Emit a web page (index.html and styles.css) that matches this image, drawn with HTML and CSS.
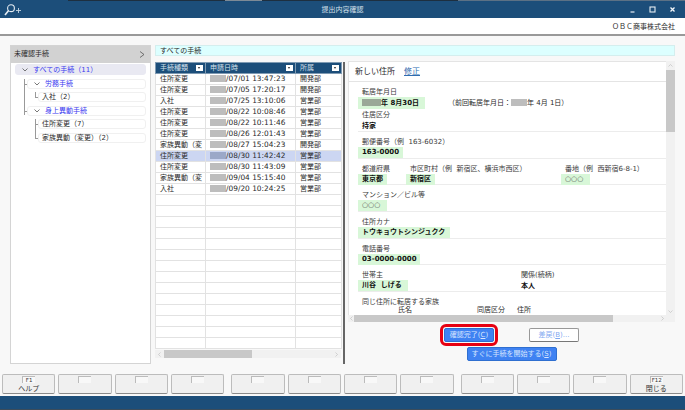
FILE: index.html
```html
<!DOCTYPE html>
<html lang="ja">

<head>
  <meta charset="utf-8">
  <title>提出内容確認</title>
  <link rel="stylesheet" href="styles.css">
</head>

<body>
  <div class="window">
    <div class="topline"></div>
    <div class="titlebar">
      <svg class="zoom-icon" width="17" height="12" viewBox="0 0 17 12">
        <circle cx="7" cy="4.2" r="3.4" fill="none" stroke="#e6edf3" stroke-width="1.1"/>
        <path d="M4.6 6.6 L1 11" stroke="#e6edf3" stroke-width="1.6" fill="none"/>
        <path d="M12 6.5 H17 M14.5 4 V9" stroke="#c8d6e2" stroke-width="0.9" fill="none"/>
      </svg>
      <span class="title">提出内容確認</span>
      <div class="win-buttons">
        <svg width="7" height="7" viewBox="0 0 7 7"><path d="M1.5 6 H5.5" stroke="#e6edf3" stroke-width="1.2"/></svg>
        <svg width="7" height="7" viewBox="0 0 7 7"><rect x="1" y="1" width="5" height="5" fill="none" stroke="#e6edf3" stroke-width="1.1"/></svg>
        <svg width="7" height="7" viewBox="0 0 7 7"><path d="M1.5 1.5 L5.5 5.5 M5.5 1.5 L1.5 5.5" stroke="#f4f7fa" stroke-width="1.3"/></svg>
      </div>
    </div>
    <div class="companybar">ＯＢＣ商事株式会社</div>

    <div class="main">
      <div class="left-panel">
        <div class="left-head">
          <span>未確認手続</span>
          <svg width="6" height="7" viewBox="0 0 6 7"><path d="M1 0.5 L5 3.5 L1 6.5" fill="none" stroke="#555" stroke-width="0.8"/></svg>
        </div>
        <ul class="tree">
          <li>
            <div class="node root">
              <svg class="chev" width="6" height="4" viewBox="0 0 6 4"><path d="M0.5 0.5 L3 3 L5.5 0.5" fill="none" stroke="#555" stroke-width="0.8"/></svg>
              <span class="link">すべての手続（11）</span>
            </div>
            <ul class="level1">
              <li>
                <div class="node">
                  <svg class="chev" width="6" height="4" viewBox="0 0 6 4"><path d="M0.5 0.5 L3 3 L5.5 0.5" fill="none" stroke="#555" stroke-width="0.8"/></svg>
                  <span class="link">労務手続</span>
                </div>
                <ul class="level2">
                  <li><div class="node leaf">入社（2）</div></li>
                </ul>
              </li>
              <li>
                <div class="node">
                  <svg class="chev" width="6" height="4" viewBox="0 0 6 4"><path d="M0.5 0.5 L3 3 L5.5 0.5" fill="none" stroke="#555" stroke-width="0.8"/></svg>
                  <span class="link">身上異動手続</span>
                </div>
                <ul class="level2">
                  <li><div class="node leaf">住所変更（7）</div></li>
                  <li><div class="node leaf">家族異動（変更）（2）</div></li>
                </ul>
              </li>
            </ul>
          </li>
        </ul>
      </div>

      <div class="right-col">
        <div class="banner">すべての手続</div>
        <div class="content">
          <div class="list-col">
            <table class="list">
              <colgroup><col class="c1"><col class="c2"><col class="c3"></colgroup>
              <thead>
                <tr>
                  <th>手続種類<span class="drop"></span></th>
                  <th>申請日時<span class="drop"></span></th>
                  <th>所属<span class="drop"></span></th>
                </tr>
              </thead>
              <tbody>
                <tr><td>住所変更</td><td><span class="mask"></span><span class="num">/07/01 13:47:23</span></td><td>開発部</td></tr>
                <tr><td>住所変更</td><td><span class="mask"></span><span class="num">/07/05 17:20:17</span></td><td>開発部</td></tr>
                <tr><td>入社</td><td><span class="mask"></span><span class="num">/07/25 13:10:06</span></td><td>営業部</td></tr>
                <tr><td>住所変更</td><td><span class="mask"></span><span class="num">/08/22 10:08:46</span></td><td>営業部</td></tr>
                <tr><td>住所変更</td><td><span class="mask"></span><span class="num">/08/22 10:11:46</span></td><td>営業部</td></tr>
                <tr><td>住所変更</td><td><span class="mask"></span><span class="num">/08/26 12:01:43</span></td><td>営業部</td></tr>
                <tr><td>家族異動（変</td><td><span class="mask"></span><span class="num">/08/27 15:04:23</span></td><td>開発部</td></tr>
                <tr class="selected"><td>住所変更</td><td><span class="mask"></span><span class="num">/08/30 11:42:42</span></td><td>営業部</td></tr>
                <tr><td>住所変更</td><td><span class="mask"></span><span class="num">/08/30 11:43:09</span></td><td>営業部</td></tr>
                <tr><td>家族異動（変</td><td><span class="mask"></span><span class="num">/09/04 15:15:40</span></td><td>営業部</td></tr>
                <tr><td>入社</td><td><span class="mask"></span><span class="num">/09/20 10:24:25</span></td><td>営業部</td></tr>
                <tr><td></td><td></td><td></td></tr>
                <tr><td></td><td></td><td></td></tr>
                <tr><td></td><td></td><td></td></tr>
                <tr><td></td><td></td><td></td></tr>
                <tr><td></td><td></td><td></td></tr>
                <tr><td></td><td></td><td></td></tr>
                <tr><td></td><td></td><td></td></tr>
                <tr><td></td><td></td><td></td></tr>
                <tr><td></td><td></td><td></td></tr>
                <tr><td></td><td></td><td></td></tr>
                <tr><td></td><td></td><td></td></tr>
                <tr><td></td><td></td><td></td></tr>
                <tr><td></td><td></td><td></td></tr>
                <tr><td></td><td></td><td></td></tr>
              </tbody>
            </table>
            <div class="hscroll list-scroll">
              <svg width="3" height="5" viewBox="0 0 3 5"><path d="M2.5 0.5 L0.5 2.5 L2.5 4.5" fill="none" stroke="#bbb" stroke-width="0.6"/></svg>
              <div class="thumb"></div>
              <svg width="3" height="5" viewBox="0 0 3 5"><path d="M0.5 0.5 L2.5 2.5 L0.5 4.5" fill="none" stroke="#bbb" stroke-width="0.6"/></svg>
            </div>
          </div>

          <div class="splitter"></div>

          <div class="detail-col">
            <div class="detail-box">
              <div class="detail-view">
                <div class="detail-head">新しい住所<a class="edit">修正</a></div>

                <div class="sec sec-first">
                  <div class="label">転居年月日</div>
                  <div class="value-row">
                    <span class="value date-value"><span class="mask mask-dark"></span>年&nbsp;8月30日</span>
                    <span class="prev">（前回転居年月日：<span class="mask"></span>年 4月 1日）</span>
                  </div>
                  <div class="label">住居区分</div>
                  <div class="value plain">持家</div>
                </div>

                <div class="sec">
                  <div class="label">郵便番号（例&nbsp;&nbsp;163-6032）</div>
                  <span class="value w-zip">163-0000</span>
                </div>

                <div class="sec sec-address">
                  <div>
                    <div class="label">都道府県</div>
                    <span class="value w-short">東京都</span>
                  </div>
                  <div>
                    <div class="label">市区町村（例&nbsp;&nbsp;新宿区、横浜市西区）</div>
                    <span class="value w-short">新宿区</span>
                  </div>
                  <div>
                    <div class="label">番地（例&nbsp;&nbsp;西新宿6-8-1）</div>
                    <span class="value w-short thin">○○○</span>
                  </div>
                </div>

                <div class="sec">
                  <div class="label">マンション／ビル等</div>
                  <span class="value w-short thin">○○○</span>
                </div>

                <div class="sec">
                  <div class="label">住所カナ</div>
                  <span class="value w-kana">トウキョウトシンジュクク</span>
                </div>

                <div class="sec">
                  <div class="label">電話番号</div>
                  <span class="value w-tel">03-0000-0000</span>
                </div>

                <div class="sec sec-head">
                  <div>
                    <div class="label">世帯主</div>
                    <span class="value w-head">川谷&nbsp;&nbsp;しげる</span>
                  </div>
                  <div>
                    <div class="label">関係(続柄)</div>
                    <div class="value plain">本人</div>
                  </div>
                </div>

                <div class="sec sec-last">
                  <div class="label">同じ住所に転居する家族</div>
                  <div class="family-cols">
                    <span>氏名</span><span>同居区分</span><span>住所</span>
                  </div>
                </div>
              </div>

              <div class="vscroll">
                <svg width="5" height="3" viewBox="0 0 5 3"><path d="M0.5 2.5 L2.5 0.5 L4.5 2.5" fill="none" stroke="#bbb" stroke-width="0.6"/></svg>
                <div class="thumb"></div>
                <svg class="arrow-end" width="5" height="3" viewBox="0 0 5 3"><path d="M0.5 0.5 L2.5 2.5 L4.5 0.5" fill="none" stroke="#bbb" stroke-width="0.6"/></svg>
              </div>

              <div class="hscroll detail-scroll">
                <svg width="3" height="5" viewBox="0 0 3 5"><path d="M2.5 0.5 L0.5 2.5 L2.5 4.5" fill="none" stroke="#bbb" stroke-width="0.6"/></svg>
                <div class="thumb"></div>
                <svg width="3" height="5" viewBox="0 0 3 5"><path d="M0.5 0.5 L2.5 2.5 L0.5 4.5" fill="none" stroke="#bbb" stroke-width="0.6"/></svg>
              </div>
              <div class="scroll-corner"></div>
            </div>

            <div class="actions">
              <div class="action-row">
                <button class="btn btn-primary btn-focus">確認完了(<u>C</u>)</button>
                <button class="btn btn-plain">差戻(<u>B</u>)...</button>
              </div>
              <button class="btn btn-primary btn-start">すぐに手続を開始する(<u>S</u>)</button>
            </div>
          </div>
        </div>
      </div>
    </div>

    <div class="fkeys">
      <div class="fgroup">
        <button class="fkey"><span class="fname">F1</span><span class="fcap">ヘルプ</span></button>
        <button class="fkey"><span class="fname"></span></button>
        <button class="fkey"><span class="fname"></span></button>
        <button class="fkey"><span class="fname"></span></button>
      </div>
      <div class="fgroup">
        <button class="fkey"><span class="fname"></span></button>
        <button class="fkey"><span class="fname"></span></button>
        <button class="fkey"><span class="fname"></span></button>
        <button class="fkey"><span class="fname"></span></button>
      </div>
      <div class="fgroup">
        <button class="fkey"><span class="fname"></span></button>
        <button class="fkey"><span class="fname"></span></button>
        <button class="fkey"><span class="fname"></span></button>
        <button class="fkey"><span class="fname">F12</span><span class="fcap">閉じる</span></button>
      </div>
    </div>
    <div class="statusbar"></div>
  </div>
</body>

</html>
```

FILE: styles.css
```css
:root {
  --primary-color: #1c4e7a;
  --background-color: #f8f8f8;
  --text-color: #2a2a2a;
  --link-color: #3a3af0;
  --border-color: #d4d4d4;
  --value-color: #d8f7d8;
  --button-color: #3f82f2;
  --scroll-color: #c8c8c8;
}

* {
  box-sizing: border-box;
}

html,
body {
  margin: 0;
  padding: 0;
}

body {
  font-family: "DejaVu Sans", "Noto Sans CJK JP", sans-serif;
  font-size: 7px;
  line-height: 11px;
  color: var(--text-color);
  background: var(--background-color);
}

ul {
  list-style: none;
  margin: 0;
  padding: 0;
}

.window {
  width: 685px;
  height: 410px;
  display: flex;
  flex-direction: column;
  overflow: hidden;
}

.topline {
  height: 1px;
  flex: none;
  background: linear-gradient(to right,
      var(--primary-color) 68px,
      #1d2f40 68px, #1d2f40 225px,
      #7d8a96 225px, #7d8a96 262px,
      #1d2f40 262px, #1d2f40 458px,
      #5c7185 458px);
}

/* title bar */
.titlebar {
  height: 17px;
  flex: none;
  background: var(--primary-color);
  color: #d5e0ea;
  display: flex;
  align-items: center;
  justify-content: center;
  padding-top: 2px;
  position: relative;
}

.zoom-icon {
  position: absolute;
  left: 4px;
  top: 3px;
}

.win-buttons {
  position: absolute;
  right: 9px;
  top: 5px;
  display: flex;
  gap: 13px;
}

.companybar {
  height: 18px;
  flex: none;
  background: #fff;
  border-bottom: 2px solid #999;
  text-align: right;
  padding: 4px 10px 0 0;
}

/* main area */
.main {
  flex: 1;
  min-height: 0;
  display: flex;
  gap: 4px;
  padding: 9px 10px;
}

.left-panel {
  width: 141px;
  flex: none;
  background: #fff;
  border: 1px solid var(--border-color);
}

.left-head {
  height: 17px;
  background: #d2d2d2;
  display: flex;
  align-items: center;
  justify-content: space-between;
  padding: 0 5px 0 3px;
}

.tree {
  padding: 1px 4px 0 4px;
}

.node {
  height: 10px;
  line-height: 10px;
  margin-top: 3.5px;
  background: #fff;
  border: 1px solid #f0f0f0;
  border-radius: 3px;
  display: flex;
  align-items: center;
  position: relative;
  white-space: nowrap;
}

.node.root {
  height: 11px;
  margin-top: 0;
  background: #e9e9f2;
  border-color: #e9e9f2;
}

.chev {
  margin: 0 5px 0 6px;
  flex: none;
}

.node.root .chev {
  margin-right: 5px;
}

.link {
  color: var(--link-color);
}

.leaf {
  padding-left: 3px;
}

.level1 {
  margin-left: 12px;
}

.level2 {
  margin-left: 11px;
}

/* connector lines of the tree */
.level1 > li > .node::before,
.level2 > li > .node::before {
  content: "";
  position: absolute;
  left: -4px;
  top: 4px;
  width: 3px;
  height: 1px;
  background: #999;
}

.level1,
.level2 {
  position: relative;
}

.level1::before,
.level2::before {
  content: "";
  position: absolute;
  left: -3px;
  top: 0;
  width: 1px;
  background: #999;
}

.level1::before {
  bottom: 28px;
}

.level2::before {
  bottom: 5px;
}

.right-col {
  flex: 1;
  min-width: 0;
  display: flex;
  flex-direction: column;
}

.banner {
  height: 11px;
  flex: none;
  background: #dcffff;
  border: 1px solid #d4eeee;
  line-height: 10px;
  padding-left: 4px;
}

.content {
  flex: 1;
  min-height: 0;
  display: flex;
  margin-top: 5px;
}

/* list */
.list-col {
  width: 186px;
  flex: none;
  padding-top: 1px;
}

.list {
  width: 186px;
  table-layout: fixed;
  border-collapse: collapse;
  background: #fff;
}

.c1 {
  width: 50px;
}

.c2 {
  width: 90px;
}

.c3 {
  width: 46px;
}

.list th,
.list td {
  height: 11px;
  line-height: 10px;
  padding: 0 0 0 4px;
  font-weight: normal;
  text-align: left;
  white-space: nowrap;
  overflow: hidden;
  border: 1px solid #e2e2e2;
}

.list th {
  background: var(--primary-color);
  color: #d5e0ea;
  border-color: #7f9ab2;
  position: relative;
}

.drop {
  position: absolute;
  right: 2px;
  top: 2px;
  width: 7px;
  height: 6px;
  background: #fff;
}

.drop::after {
  content: "";
  position: absolute;
  left: 2px;
  top: 2px;
  border-left: 1.5px solid transparent;
  border-right: 1.5px solid transparent;
  border-top: 2px solid #222;
}

.selected td {
  background: #ccd6f2;
}

.mask {
  display: inline-block;
  width: 16px;
  height: 7px;
  background: #bdbdbd;
  vertical-align: -1px;
}

.selected .mask {
  background: #9ba8c8;
}

.num {
  font-size: 7.4px;
}

.hscroll {
  background: #f1f1f1;
  display: flex;
  align-items: center;
}

.hscroll .thumb {
  height: 100%;
  background: var(--scroll-color);
}

.list-scroll {
  height: 8px;
  margin-top: 1px;
  justify-content: space-between;
  padding: 0 3px;
  position: relative;
}

.list-scroll .thumb {
  width: 88px;
  margin-left: 3px;
  margin-right: auto;
}

.splitter {
  width: 2px;
  flex: none;
  margin: 1px 3px 0 2px;
  background: #666;
}

/* detail */
.detail-col {
  flex: 1;
  min-width: 0;
  display: flex;
  flex-direction: column;
}

.detail-box {
  height: 261px;
  flex: none;
  display: grid;
  grid-template-columns: 318px 9px;
  grid-template-rows: 254px 7px;
}

.detail-view {
  background: #fff;
  overflow: hidden;
  border-top: 1px solid #e4e4e4;
  border-left: 1px solid #e4e4e4;
}

.detail-head {
  height: 20px;
  line-height: 20px;
  font-size: 8px;
  padding-left: 6px;
  border-bottom: 1px solid #e4e4e4;
}

.edit {
  color: #2f6db0;
  text-decoration: underline;
  margin-left: 9px;
}

.sec {
  height: 26.67px;
  margin-left: 9px;
  padding: 4px 0 0 0;
  border-bottom: 1px solid #ececec;
}

.sec-first {
  height: 50px;
}

.sec-address {
  display: grid;
  grid-template-columns: 48px 155px 1fr;
}

.sec-head {
  display: grid;
  grid-template-columns: 159px 1fr;
}

.sec-last {
  height: auto;
  border-bottom: none;
}

.label {
  height: 11px;
  line-height: 13px;
  padding-left: 4px;
  white-space: nowrap;
  color: #3a3a3a;
}

.value {
  display: inline-block;
  height: 11px;
  background: var(--value-color);
  font-weight: bold;
  color: #111;
  padding-left: 4px;
  white-space: nowrap;
}

.value.plain {
  display: block;
  line-height: 13px;
  background: none;
}

.value.thin {
  font-weight: normal;
  color: #555;
}

.value-row {
  display: flex;
  height: 12px;
}

.date-value {
  width: 67px;
  height: 12px;
  line-height: 12px;
}

.mask-dark {
  width: 19px;
  background: #9aa898;
}

.prev {
  margin-left: 23px;
  line-height: 12px;
}

.w-zip {
  width: 45px;
}

.w-short {
  width: 29px;
}

.w-kana {
  width: 92px;
}

.w-tel {
  width: 62px;
}

.w-head {
  width: 50px;
}

.family-cols {
  display: grid;
  grid-template-columns: 79px 40px 1fr;
  margin-top: -2px;
  line-height: 10px;
  padding-left: 40px;
}

.vscroll {
  background: #f1f1f1;
  display: flex;
  flex-direction: column;
  align-items: center;
  padding-top: 3px;
}

.vscroll .thumb {
  width: 100%;
  height: 62px;
  margin-top: 3px;
  background: var(--scroll-color);
}

.arrow-end {
  margin-top: auto;
  margin-bottom: 2px;
}

.detail-scroll {
  justify-content: space-between;
  padding: 0 2px;
}

.detail-scroll .thumb {
  width: 259px;
  margin-left: 1px;
  margin-right: auto;
}

.scroll-corner {
  background: #f1f1f1;
}

/* buttons below the detail */
.actions {
  display: flex;
  flex-direction: column;
  align-items: center;
  gap: 5px;
  padding-top: 6px;
}

.action-row {
  display: flex;
  gap: 35px;
  align-items: flex-end;
}

.btn {
  font: inherit;
  line-height: 12px;
  padding: 0;
  height: 14px;
  width: 50px;
  border-radius: 2px;
  white-space: nowrap;
  cursor: pointer;
}

.btn-primary {
  background: var(--button-color);
  color: #d6e5ff;
  border: 1px solid #2f6fd0;
}

.btn-plain {
  background: #fff;
  color: #7fa8f0;
  border: 1px solid #999;
  border-bottom-color: #777;
}

.btn-focus {
  outline: 3px solid #e60012;
  outline-offset: 1px;
  border-radius: 2px;
}

.btn-start {
  width: 90px;
}

/* function keys */
.fkeys {
  height: 23px;
  flex: none;
  display: flex;
  gap: 7px;
  padding: 1px 2px 2px;
  background: var(--background-color);
}

.fgroup {
  flex: 1;
  display: flex;
  gap: 3px;
}

.fkey {
  flex: 1;
  font: inherit;
  font-size: 7px;
  color: #333;
  background: #f0f0f0;
  border: 1px solid #bcbcbc;
  border-bottom: 1px solid #8a8a8a;
  border-radius: 2px;
  padding: 1px 0 0;
  display: flex;
  flex-direction: column;
  align-items: center;
  line-height: 10px;
}

.fname {
  width: 13px;
  height: 7px;
  line-height: 7px;
  font-size: 5.5px;
  text-align: center;
  border-top: 1px solid #bbb;
  border-left: 1px solid #bbb;
  background: #f8f8f8;
}

.fcap {
  margin-top: 1px;
}

.statusbar {
  height: 14px;
  flex: none;
  background: var(--primary-color);
  border-bottom: 1px solid #3c4c5a;
}
```
